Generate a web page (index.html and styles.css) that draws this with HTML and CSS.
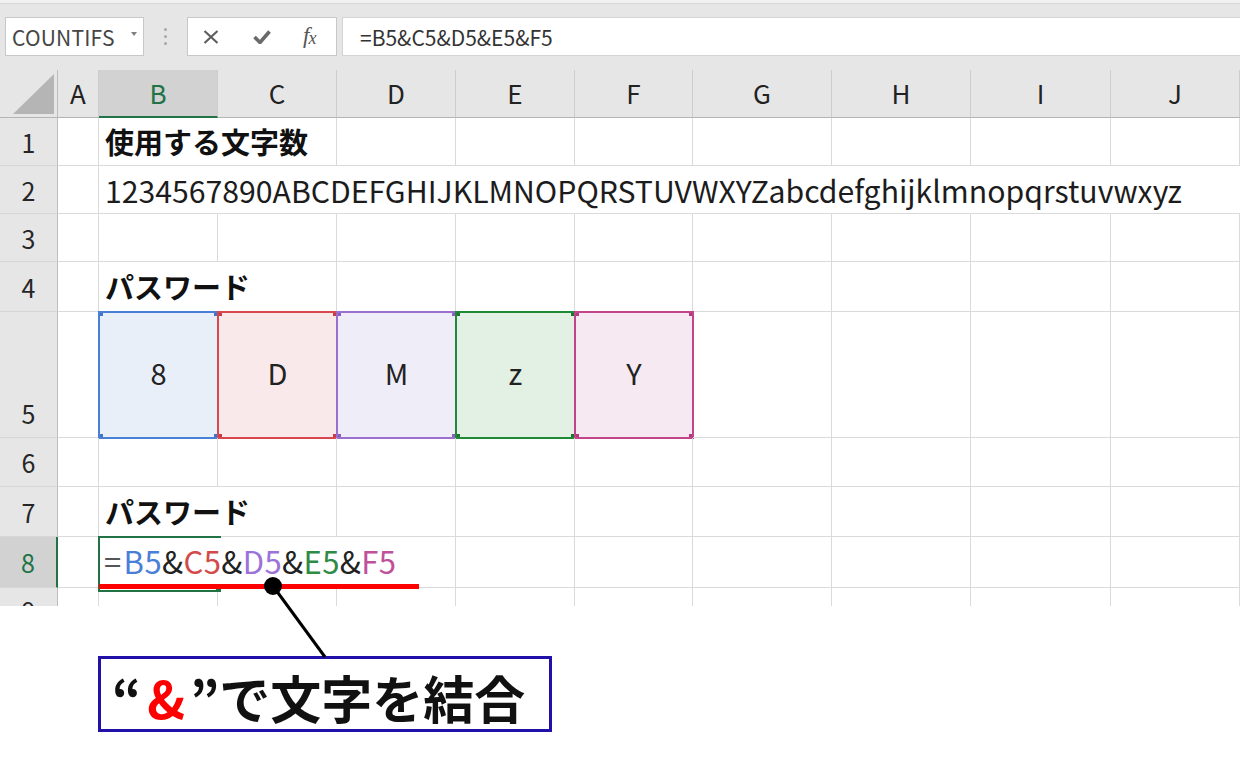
FILE: index.html
```html
<!DOCTYPE html>
<html lang="ja">
<head>
<meta charset="utf-8">
<title>Excel & 結合</title>
<link rel="stylesheet" href="styles.css">
</head>
<body>
<div class="app">
  <div class="toolbar">
    <div class="namebox"><span class="nb-text">COUNTIFS</span><span class="nb-arrow"></span></div>
    <div class="dots"><span></span><span></span><span></span></div>
    <div class="fbtns">
      <svg class="ic ic-x" width="16" height="14" viewBox="0 0 16 14"><path d="M1.5 1 L14.5 13 M14.5 1 L1.5 13" stroke="#5f5f5f" stroke-width="2.2" fill="none"/></svg>
      <svg class="ic ic-ok" width="18" height="14" viewBox="0 0 18 14"><path d="M1.5 7 L7 12.5 L16.5 1.5" stroke="#6a6a6a" stroke-width="3.6" fill="none"/></svg>
      <span class="fx">f<span class="fx-x">x</span></span>
    </div>
    <div class="finput">=B5&amp;C5&amp;D5&amp;E5&amp;F5</div>
  </div>

  <div class="sheet">
    <!-- header row -->
    <div class="corner"><span class="tri"></span></div>
    <div class="ch">A</div>
    <div class="ch ch-sel">B</div>
    <div class="ch">C</div>
    <div class="ch">D</div>
    <div class="ch">E</div>
    <div class="ch">F</div>
    <div class="ch">G</div>
    <div class="ch">H</div>
    <div class="ch">I</div>
    <div class="ch">J</div>

    <!-- row 1 -->
    <div class="rh">1</div>
    <div class="c"></div>
    <div class="c span2 bold">使用する文字数</div>
    <div class="c"></div><div class="c"></div><div class="c"></div><div class="c"></div><div class="c"></div><div class="c"></div><div class="c"></div>

    <!-- row 2 -->
    <div class="rh">2</div>
    <div class="c"></div>
    <div class="c spanall txt">1234567890ABCDEFGHIJKLMNOPQRSTUVWXYZabcdefghijklmnopqrstuvwxyz</div>

    <!-- row 3 -->
    <div class="rh">3</div>
    <div class="c"></div><div class="c"></div><div class="c"></div><div class="c"></div><div class="c"></div><div class="c"></div><div class="c"></div><div class="c"></div><div class="c"></div><div class="c"></div>

    <!-- row 4 -->
    <div class="rh">4</div>
    <div class="c"></div>
    <div class="c span2 bold">パスワード</div>
    <div class="c"></div><div class="c"></div><div class="c"></div><div class="c"></div><div class="c"></div><div class="c"></div><div class="c"></div>

    <!-- row 5 -->
    <div class="rh rh-bottom">5</div>
    <div class="c"></div>
    <div class="pw pw-b">8</div>
    <div class="pw pw-c">D</div>
    <div class="pw pw-d">M</div>
    <div class="pw pw-e">z</div>
    <div class="pw pw-f">Y</div>
    <div class="c"></div><div class="c"></div><div class="c"></div><div class="c"></div>

    <!-- row 6 -->
    <div class="rh">6</div>
    <div class="c"></div><div class="c"></div><div class="c"></div><div class="c"></div><div class="c"></div><div class="c"></div><div class="c"></div><div class="c"></div><div class="c"></div><div class="c"></div>

    <!-- row 7 -->
    <div class="rh">7</div>
    <div class="c"></div>
    <div class="c span2 bold">パスワード</div>
    <div class="c"></div><div class="c"></div><div class="c"></div><div class="c"></div><div class="c"></div><div class="c"></div><div class="c"></div>

    <!-- row 8 -->
    <div class="rh rh-sel">8</div>
    <div class="c c-a8"></div>
    <div class="c span3 formula active"><span class="f-eq">=</span><span class="r-b">B5</span>&amp;<span class="r-c">C5</span>&amp;<span class="r-d">D5</span>&amp;<span class="r-e">E5</span>&amp;<span class="r-f">F5</span></div>
    <div class="c"></div><div class="c"></div><div class="c"></div><div class="c"></div><div class="c"></div><div class="c"></div>

    <!-- row 9 -->
    <div class="rh rh-top">9</div>
    <div class="c"></div><div class="c"></div><div class="c"></div><div class="c"></div><div class="c"></div><div class="c"></div><div class="c"></div><div class="c"></div><div class="c"></div><div class="c"></div>
  </div>

  <div class="callout"><span class="q">“</span><span class="amp">&amp;</span><span class="q">”</span>で文字を結合</div>

  <svg class="overlay" width="1240" height="757" viewBox="0 0 1240 757">
    <line x1="273" y1="586" x2="325" y2="657" stroke="#000" stroke-width="3"/>
    <rect x="99" y="584" width="320" height="5" fill="#ff0000"/>
    <circle cx="273" cy="586" r="9" fill="#000"/>
  </svg>
</div>
</body>
</html>
```

FILE: styles.css
```css
* { box-sizing: border-box; }
html, body { margin: 0; padding: 0; background: #ffffff; }
body { font-family: "Noto Sans CJK JP", "Noto Sans", sans-serif; color: #222; }

.app { position: relative; width: 1240px; height: 757px; overflow: hidden; background: #fff; }

/* ---------- toolbar ---------- */
.toolbar {
  height: 70px;
  display: flex;
  align-items: flex-start;
  padding-top: 17px;
  background: linear-gradient(#f1f1f1 0, #f1f1f1 3px, #d8d8d8 3px, #d8d8d8 4px, #e6e6e6 4px);
}
.namebox {
  margin-left: 5px;
  width: 139px;
  height: 39px;
  background: #fff;
  border: 1px solid #c8c8c8;
  display: flex;
  align-items: center;
  padding-left: 6px;
}
.nb-text { font-size: 21px; color: #454545; letter-spacing: 0.2px; }
.nb-arrow {
  margin-left: 16px;
  width: 0; height: 0;
  border-left: 3.5px solid transparent;
  border-right: 3.5px solid transparent;
  border-top: 4px solid #808080;
  margin-top: -6px;
}
.dots {
  width: 43px;
  height: 39px;
  display: flex;
  flex-direction: column;
  align-items: center;
  justify-content: center;
  gap: 4px;
}
.dots span { width: 3px; height: 3px; background: #a8a8a8; border-radius: 50%; }
.fbtns {
  width: 150px;
  height: 39px;
  background: #fff;
  border: 1px solid #c8c8c8;
  display: flex;
  align-items: center;
  padding-left: 15px;
}
.ic-x { margin-right: 34px; }
.ic-ok { margin-right: 32px; margin-top: 1px; }
.fx {
  font-family: "Liberation Serif", "DejaVu Serif", serif;
  font-style: italic;
  font-size: 23px;
  color: #555;
  line-height: 1;
  margin-top: -2px;
}
.fx-x { font-size: 18px; position: relative; top: 1px; margin-left: -1px; }
.finput {
  margin-left: 5px;
  flex: 1;
  height: 39px;
  background: #fff;
  border: 1px solid #d4d4d4;
  border-right: none;
  display: flex;
  align-items: center;
  padding-left: 17px;
  font-size: 21px;
  color: #333;
}

/* ---------- sheet ---------- */
.sheet {
  display: grid;
  grid-template-columns: 58px 41px 119px 119px 119px 119px 118px 139px 139px 140px 1fr;
  grid-template-rows: 48px 48px 48px 48px 50px 126px 49px 50px 51px 48px;
  height: 536px;
  overflow: hidden;
  background: #fff;
}
.corner {
  background: #e6e6e6;
  border-right: 1px solid #bdbdbd;
  border-bottom: 1px solid #b4b4b4;
  display: flex;
  align-items: flex-end;
  justify-content: flex-end;
  padding: 0 3px 3px 0;
}
.tri {
  width: 41px; height: 40px;
  background: #b5b5b5;
  clip-path: polygon(100% 0, 100% 100%, 0 100%);
}
.ch {
  background: #e6e6e6;
  border-bottom: 1px solid #b4b4b4;
  border-right: 1px solid #cdcdcd;
  display: flex;
  align-items: center;
  justify-content: center;
  font-size: 26px;
  color: #222;
  padding-bottom: 2px;
}
.ch-sel { background: #d2d2d2; color: #217346; border-bottom: 2px solid #217346; }
.rh {
  background: #e6e6e6;
  border-right: 1px solid #bdbdbd;
  border-bottom: 1px solid #d6d6d6;
  display: flex;
  align-items: center;
  justify-content: center;
  font-size: 25px;
  color: #262626;
}
.rh-bottom { align-items: flex-end; padding-bottom: 6px; }
.rh-top { align-items: flex-start; padding-top: 4px; }
.rh-sel { background: #d2d2d2; color: #217346; border-right: 2px solid #217346; }

.c {
  border-right: 1px solid #dadada;
  border-bottom: 1px solid #dadada;
  display: flex;
  align-items: center;
  padding-left: 6px;
  white-space: nowrap;
}
.span2 { grid-column: span 2; }
.span3 { grid-column: span 3; }
.spanall { grid-column: span 9; border-right: none; }
.bold { font-size: 29px; font-weight: 700; color: #111; padding-bottom: 2px; }
.txt { font-size: 30.2px; color: #1c1c1c; }

/* password boxes */
.pw {
  margin: -1px -1px -1px -1px;
  border: 2px solid;
  display: flex;
  align-items: center;
  justify-content: center;
  padding-bottom: 7px;
  font-size: 29px;
  color: #222;
  background-origin: border-box;
  background-repeat: no-repeat;
  background-size: 6px 6px, 6px 6px, 6px 6px, 6px 6px, auto;
  background-position: left -1px top -1px, right -1px top -1px, left -1px bottom -1px, right -1px bottom -1px, 0 0;
}
.pw-b { border-color: #4a7fd6; background-image: linear-gradient(#3f74cc,#3f74cc), linear-gradient(#3f74cc,#3f74cc), linear-gradient(#3f74cc,#3f74cc), linear-gradient(#3f74cc,#3f74cc), linear-gradient(#e9eff9,#e9eff9); }
.pw-c { border-color: #d9474f; background-image: linear-gradient(#cc3a44,#cc3a44), linear-gradient(#cc3a44,#cc3a44), linear-gradient(#cc3a44,#cc3a44), linear-gradient(#cc3a44,#cc3a44), linear-gradient(#f9e9ea,#f9e9ea); }
.pw-d { border-color: #9a6fce; background-image: linear-gradient(#8c5fc4,#8c5fc4), linear-gradient(#8c5fc4,#8c5fc4), linear-gradient(#8c5fc4,#8c5fc4), linear-gradient(#8c5fc4,#8c5fc4), linear-gradient(#efedf8,#efedf8); }
.pw-e { border-color: #1f8a36; background-image: linear-gradient(#17782c,#17782c), linear-gradient(#17782c,#17782c), linear-gradient(#17782c,#17782c), linear-gradient(#17782c,#17782c), linear-gradient(#e3f1e5,#e3f1e5); }
.pw-f { border-color: #c2458b; background-image: linear-gradient(#b5397e,#b5397e), linear-gradient(#b5397e,#b5397e), linear-gradient(#b5397e,#b5397e), linear-gradient(#b5397e,#b5397e), linear-gradient(#f6e9f1,#f6e9f1); }

/* row 8 formula */
.formula {
  position: relative;
  font-size: 31px;
  color: #222;
  align-items: flex-end;
  padding-bottom: 4px;
  padding-left: 5px;
  letter-spacing: 0.4px;
}
.c-a8 { border-right: none; }
.active::before {
  content: "";
  position: absolute;
  left: -1px; top: -1px;
  width: 121px; height: calc(100% + 2px);
  border: 2px solid #217346;
  border-right: none;
}
.active::after {
  content: "";
  position: absolute;
  left: 117px; bottom: -3px;
  width: 5px; height: 5px;
  background: #217346;
}
.f-eq { color: #555; margin-right: 2px; }
.r-b { color: #4a7fd8; }
.r-c { color: #d24b4b; }
.r-d { color: #9b72d8; }
.r-e { color: #2e8b45; }
.r-f { color: #c0509a; }

/* ---------- callout ---------- */
.callout {
  margin-top: 50px;
  margin-left: 98px;
  width: 454px;
  height: 76px;
  border: 3px solid #2211a8;
  display: flex;
  align-items: center;
  padding-left: 11px;
  padding-top: 6px;
  font-size: 51px;
  font-weight: 700;
  color: #111;
  white-space: nowrap;
  line-height: 1;
}
.q { font-weight: 700; }
.amp { color: #ff0000; margin: 0 5px 0 6px; }

.overlay { position: absolute; left: 0; top: 0; pointer-events: none; }
```
